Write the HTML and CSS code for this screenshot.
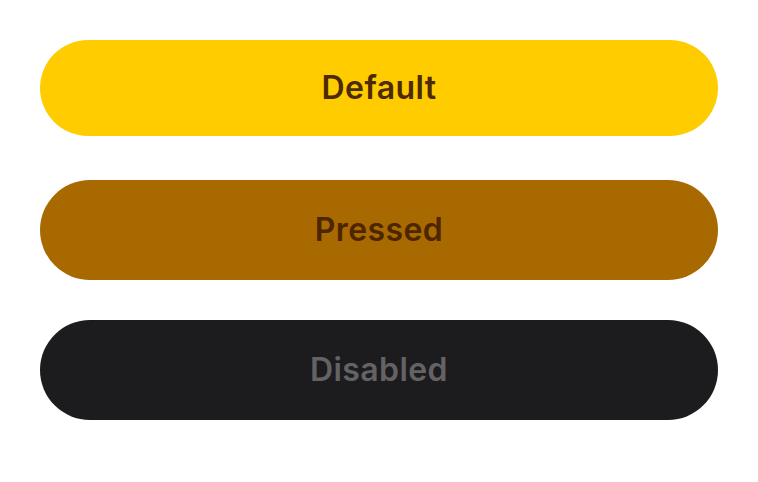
FILE: index.html
```html
<!DOCTYPE html>
<html lang="en">
	<head>
		<meta charset="UTF-8" />
		<meta name="viewport" content="width=device-width, initial-scale=1.0" />
		<title>Button states</title>
		<link rel="stylesheet" href="styles.css">
	</head>
	<body>
		<div class="btn-list">
			<button class="btn btn-default">Default</button>
			<button class="btn btn-pressed">Pressed</button>
			<button class="btn btn-disabled" disabled>Disabled</button>
		</div>
	</body>
</html>
```

FILE: styles.css
```css
html,
body {
	width: 100%;
	height: 100%;
}

body {
	margin: 0;
	padding: 40px;
	box-sizing: border-box;
	background: #fff;
	font-family: Inter, 'Noto Sans', sans-serif;
}

.btn-list {
	display: flex;
	flex-direction: column;
	gap: 40px;
}

.btn {
	display: flex;
	align-items: center;
	justify-content: center;
	width: 100%;
	height: 100px;
	padding: 0 0 2px 0;
	margin: 0;
	border: none;
	border-radius: 50px;
	font-family: inherit;
	font-size: 32px;
	font-weight: 600;
	letter-spacing: 0.4px;
	outline: none;
}

.btn-default {
	height: 96px;
	margin-bottom: 4px;
	background-color: #ffcc00;
	color: #4d2a00;
}

.btn-pressed {
	background-color: #a86a00;
	color: #4d2600;
}

.btn-disabled {
	background-color: #1c1c1e;
	color: #636366;
}
```
